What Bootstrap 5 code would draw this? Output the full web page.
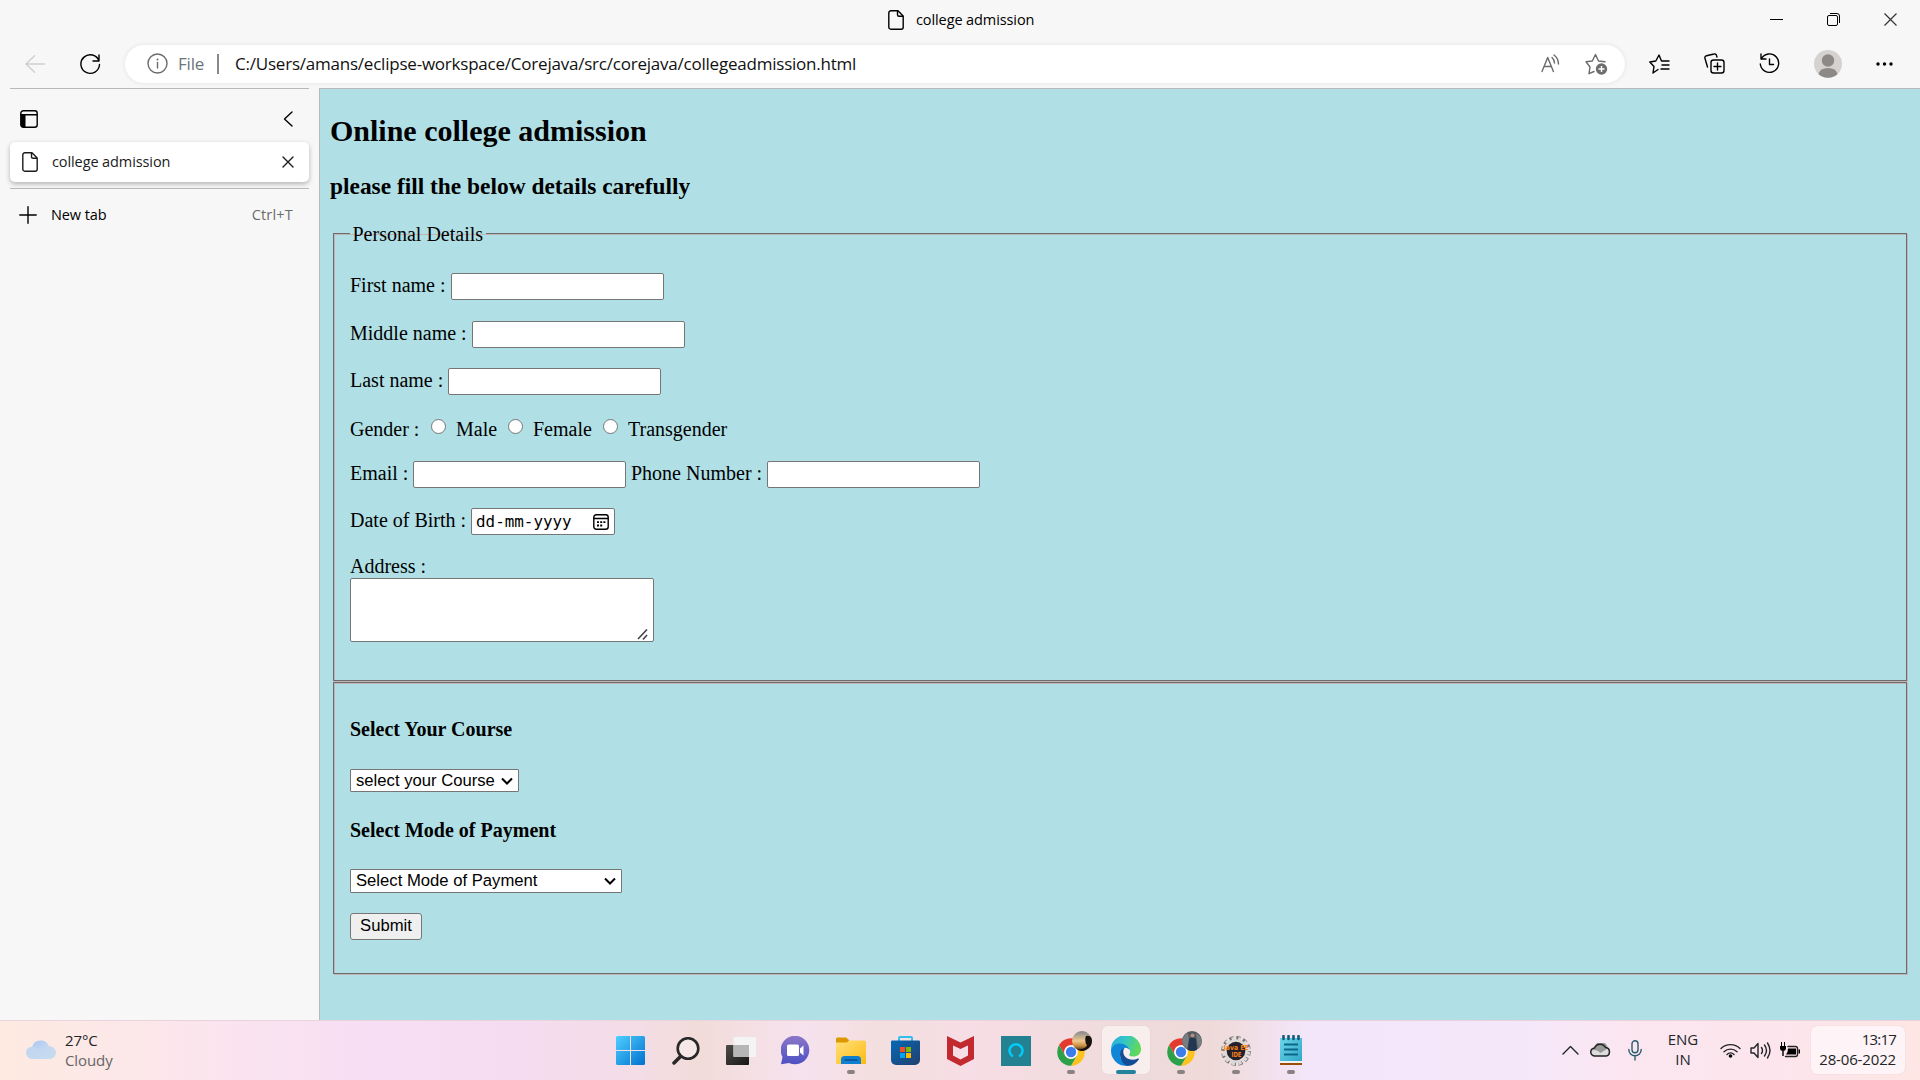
<!DOCTYPE html>
<html lang="en">
<head>
<meta charset="utf-8">
<title>college admission</title>
<link href="https://cdn.jsdelivr.net/npm/bootstrap@5.3.0/dist/css/bootstrap.min.css" rel="stylesheet">
<script src="https://cdn.jsdelivr.net/npm/bootstrap@5.3.0/dist/js/bootstrap.bundle.min.js"></script>
<style>
  body { width: 1920px; height: 1080px; font: 15px/20px "Open Sans", "Noto Sans", sans-serif; color: #1b1b1b; background: #f7f7f7; }
  svg { display: block; flex: none; }
  .ln { fill: none; stroke: currentColor; stroke-width: 1.4; stroke-linecap: round; stroke-linejoin: round; }

  .title-bar { height: 40px; display: grid; grid-template-columns: 888px 1fr 172px; }
  .title-doc { padding-top: 10px; }
  .win-btns > span { width: 57px; height: 38px; display: grid; place-items: center; }
  .ui-sm { font-size: 14.5px; letter-spacing: -.1px; }

  .tool-bar { height: 48px; padding: 0 0 1px 7px; }
  .tool-cell { width: 55px; display: grid; place-items: center; }
  .address { width: 1500px; height: 38px; border-radius: 19px; background: #fff; box-shadow: 0 0 5px rgba(0,0,0,.09); padding: 0 17px 0 22px; color: #6b6b6b; }
  .address-url { font-size: 17px; letter-spacing: -.22px; color: #111; }
  .address-sep { margin: 0 16px 0 13px; }

  .main-area { height: 932px; }
  .side-pane { width: 319px; padding: 0 10px; }
  .pane-head { height: 54px; border-top: 1px solid #b8b8b8; padding: 7px 16px 0 10px; }
  .tab-card { height: 40px; background: #fff; border-radius: 5px; box-shadow: 0 2px 5px rgba(0,0,0,.28); padding: 0 15px 0 12px; }
  .new-tab { margin-top: 6px; border-top: 1px solid #b8b8b8; height: 52px; padding: 0 16px 0 9px; }
  .pane-label { margin-left: 14px; }

  .page { background: #b0e0e6; border: 1px solid #b9b9b9; border-width: 1px 0 0 1px; padding: 0 10px; font: 20px/25px "Liberation Serif", serif; color: #000; }
  .page h2 { font: bold 30px/34px "Liberation Serif", serif; margin: 25px 0; }
  .page h3 { font: bold 23.4px/27px "Liberation Serif", serif; margin: 0 0 23px; }
  .page h4 { font: bold 20px/23px "Liberation Serif", serif; margin: 0; }
  .group-box { border: 1px solid #6e6c6d; box-shadow: inset 1px 1px #bfb5b7, 1px 1px #bfb5b7; margin: 0 3px; padding: 0 16px; }
  .group-box legend { float: none; width: auto; font-size: 20px; line-height: 22px; height: 23px; margin: 0; padding: 1px 2.5px 0; }
  .f-row { display: flex; align-items: flex-start; height: 27px; }
  .field { border: 1px solid #767676; border-radius: 2px; background: #fff; width: 213px; height: 27px; padding: 0; display: block; }
  .radio { appearance: none; width: 15px; height: 15px; border: 1px solid #767676; border-radius: 50%; background: #fff; margin: 2px 10px 0 0; }
  .date-field { width: 144px; padding: 0 5px 0 4px; font: 15.9px/25px "DejaVu Sans Mono", monospace; display: flex; justify-content: space-between; align-items: center; }
  .area { width: 304px; height: 64px; resize: none; }
  .pick { appearance: none; display: block; border: 1px solid #767676; border-radius: 1px; font: 16.67px/20px "Liberation Sans", sans-serif; color: #000; padding: 0 5px; background: #fff url("data:image/svg+xml,%3Csvg xmlns='http://www.w3.org/2000/svg' width='12' height='8'%3E%3Cpath d='M1 1.5l5 5 5-5' fill='none' stroke='%23000' stroke-width='2'/%3E%3C/svg%3E") no-repeat right 5px center; }
  .send { display: block; width: 72px; height: 27px; border: 1px solid #767676; border-radius: 3px; background: #efefef; font: 16.67px/22px "Liberation Sans", sans-serif; padding: 0 0 2px; color: #000; }

  .task-bar { height: 60px; display: grid; grid-template-columns: 603px 715px 602px; border-top: 1px solid #e9d3dc;
    background: linear-gradient(90deg, #fdeae0 0, #fce7ea 140px, #f9e2f1 280px, #f7def4 370px, #f5dcf0 520px, #f3dde6 640px, #f2dcd9 700px, #f6e2ee 800px, #f3dfdf 880px, #f7dde5 970px, #f0dbdd 1100px, #efdad9 1210px, #f4e6fa 1310px, #f5e7fa 1530px, #fbe6f0 1630px, #fce5ec 1780px, #fde6e3 1920px); }
  .weather { padding: 0 0 2px 26px; }
  .app { width: 55px; height: 59px; display: grid; place-items: center; position: relative; }
  .app.run::after { content: ""; position: absolute; bottom: 6px; left: 24px; width: 8px; height: 4px; border-radius: 2px; background: #8a8183; }
  .app.current::before { content: ""; position: absolute; left: 4px; top: 5px; width: 48px; height: 48px; border-radius: 5px; background: #f8eeee; box-shadow: 0 0 1px #cbb; }
  .app.current::after { left: 18px; width: 20px; background: #24839a; }
  .app svg { position: relative; }
  .badge-app { margin: 0 0 4px 7px; }
  .tray { padding: 0 0 1px 240px; }
  .tray > div { display: grid; place-items: center; }
  .clock { width: 94px; height: 48px; margin-left: 5px; border-radius: 6px; background: #fef3f6; box-shadow: 0 0 1px #dbc; padding: 0 9px 2px 0; text-align: right; letter-spacing: -.15px; }
  .clock-time { letter-spacing: -.8px; }
</style>
</head>
<body class="overflow-hidden">
<svg width="0" height="0" class="position-absolute">
  <defs>
    <symbol id="doc" viewBox="0 0 16 20"><path class="ln" d="M3 .8h7l5.200 5.200v11.200a2 2 0 0 1-2 2H2.800a2 2 0 0 1-2-2V2.800a2 2 0 0 1 2-2zM9.500 1v3.800a1.500 1.500 0 0 0 1.500 1.500h4"/></symbol>
    <symbol id="chrome" viewBox="0 0 35 35">
      <path d="M2.050 14.100A13.800 13.800 0 0 1 25.950 14.100H14a6.900 6.900 0 0 0-6 10.300z" fill="#e33b2e"/>
      <path d="M25.950 14.100A13.800 13.800 0 0 1 14 34.800l6-10.350a6.900 6.900 0 0 0 0-6.900l-3-3.450z" fill="#fcc31e"/>
      <path d="M2.050 14.100A13.800 13.800 0 0 0 14 34.800l6-10.350a6.900 6.900 0 0 1-12 0z" fill="#2da04a"/>
      <circle cx="14" cy="21" r="6.600" fill="#fff"/><circle cx="14" cy="21" r="5.200" fill="#3b7ded"/>
    </symbol>
    <linearGradient id="gWin" x1="0" y1="0" x2="1" y2="1"><stop offset="0" stop-color="#4fd0ff"/><stop offset="1" stop-color="#0070cf"/></linearGradient>
    <linearGradient id="gChat" x1="0" y1="0" x2="0" y2="1"><stop offset="0" stop-color="#8d77c8"/><stop offset="1" stop-color="#4d50c4"/></linearGradient>
    <linearGradient id="gFold" x1="0" y1="0" x2="1" y2="1"><stop offset="0" stop-color="#ffe07a"/><stop offset="1" stop-color="#fdbb13"/></linearGradient>
    <linearGradient id="gStore" x1="0" y1="0" x2="1" y2="1"><stop offset="0" stop-color="#0669b7"/><stop offset="1" stop-color="#223f6e"/></linearGradient>
    <linearGradient id="gEdgeTop" x1="0" y1="0" x2="1" y2=".3"><stop offset="0" stop-color="#2aa7e2"/><stop offset=".5" stop-color="#35c6c6"/><stop offset="1" stop-color="#5fd95a"/></linearGradient>
    <linearGradient id="gSun" x1="0" y1="0" x2="0" y2="1"><stop offset="0" stop-color="#7f8790"/><stop offset=".5" stop-color="#f0c88c"/><stop offset=".75" stop-color="#c78a3c"/><stop offset="1" stop-color="#241a14"/></linearGradient>
    <linearGradient id="gCloud" x1="0" y1="0" x2="1" y2="1"><stop offset="0" stop-color="#a4c4f2"/><stop offset="1" stop-color="#dfe9f3"/></linearGradient>
    <linearGradient id="gNote" x1="0" y1="0" x2="1" y2="1"><stop offset="0" stop-color="#6cd6ea"/><stop offset="1" stop-color="#2fa5c8"/></linearGradient>
    <linearGradient id="gDark" x1="0" y1="0" x2="1" y2="1"><stop offset="0" stop-color="#4c4c4a"/><stop offset="1" stop-color="#161616"/></linearGradient>
  </defs>
</svg>

<header>
  <div class="title-bar">
    <span></span>
    <div class="title-doc d-flex align-items-start text-black">
      <svg width="16" height="20"><use href="#doc"/></svg>
      <span class="ui-sm ms-2 ps-1">college admission</span>
    </div>
    <div class="d-flex win-btns text-black">
      <span><svg width="13" height="13"><path d="M0 6.500h13" stroke="#000"/></svg></span>
      <span><svg width="13" height="13"><g fill="none" stroke="#000"><rect x=".5" y="2.500" width="10" height="10" rx="1.500"/><path d="M3 .5h7a2.500 2.500 0 0 1 2.500 2.500v7"/></g></svg></span>
      <span><svg width="13" height="13"><path d="M.5.5l12 12m0-12l-12 12" stroke="#333" stroke-width="1.200"/></svg></span>
    </div>
  </div>
  <div class="tool-bar d-flex align-items-center">
    <div class="tool-cell"><svg width="20" height="18" style="color:#cfcfcf"><path class="ln" d="M19.500 9H.8M9.500.7L1 9l8.500 8.300"/></svg></div>
    <div class="tool-cell text-black"><svg width="22" height="22"><path class="ln" d="M20 8A9.300 9.300 0 1 0 20.500 11.500M20 2v6h-6"/></svg></div>
    <div class="address d-flex align-items-center ms-2">
      <svg width="21" height="21"><g class="ln"><circle cx="10.500" cy="10.500" r="9.500"/><path d="M10.500 9.500v5.500"/></g><circle cx="10.500" cy="6.500" r="1" fill="#6b6b6b"/></svg>
      <span class="address-url text-secondary ms-2 ps-0" style="padding-left:2px!important">File</span>
      <svg width="2" height="20" class="address-sep"><path d="M1 0v20" stroke="#888" stroke-width="2"/></svg>
      <span class="address-url">C:/Users/amans/eclipse-workspace/Corejava/src/corejava/collegeadmission.html</span>
      <svg width="20" height="20" class="ms-auto"><path class="ln" d="M1 17.500L6.700 3.500 12.400 17.500M3 12.500h7.400M11 3.500q2.500 2.500 2.500 5.500M13 1q4.500 3.500 4.500 9"/></svg>
      <svg width="23" height="22" class="ms-4"><path class="ln" d="M9 18.500l-5 2.200 1-6.700L1 8.800 7.300 8 10.500 1.500 13.500 8l6.500.8"/><circle cx="16.500" cy="16" r="5.700" fill="#6d6d6d"/><path d="M13.500 16h6M16.500 13v6" stroke="#fff" stroke-width="1.400"/></svg>
    </div>
    <div class="d-flex text-black" style="padding-left:7px">
      <div class="tool-cell"><svg width="21" height="20"><path class="ln" d="M9 15.500l-5 3.500 1-6.500L.8 8l6-1L10 1l2.500 6H20M13 11h7M12 15h8"/></svg></div>
      <div class="tool-cell"><svg width="21" height="21"><g class="ln"><path d="M3.500 14L1 5.500a2 2 0 0 1 1.500-2.800L10 1a2 2 0 0 1 2.500 1.500L13 4"/><rect x="7" y="7" width="13" height="13" rx="2.500"/><path d="M13.500 10v7M10 13.500h7"/></g></svg></div>
      <div class="tool-cell"><svg width="21" height="21"><path class="ln" d="M2.500 5.500A9.200 9.200 0 1 1 1.300 11M2 1v5h5M10.500 6v5.500h4"/></svg></div>
      <div class="tool-cell" style="width:61px"><svg width="28" height="28"><circle cx="14" cy="14" r="14" fill="#d5d3d0"/><circle cx="14" cy="10.500" r="6.200" fill="#8d8986"/><path d="M4.500 24Q6 18 14 18t9.500 6A14 14 0 0 1 4.500 24z" fill="#8d8986"/></svg></div>
      <div class="tool-cell" style="width:53px"><svg width="17" height="4"><circle cx="2" cy="2" r="1.700"/><circle cx="8.500" cy="2" r="1.700"/><circle cx="15" cy="2" r="1.700"/></svg></div>
    </div>
  </div>
</header>

<main class="main-area d-flex">
  <aside class="side-pane flex-shrink-0">
    <div class="pane-head d-flex align-items-center justify-content-between text-black">
      <svg width="18" height="18"><rect x=".8" y=".8" width="16.400" height="16.400" rx="2.500" class="ln"/><path d="M1 4.800h16" class="ln"/><path d="M1 4.500h4.500v12.700H3q-2 0-2-2z"/></svg>
      <svg width="10" height="16"><path class="ln" d="M9 1L1.500 8 9 15"/></svg>
    </div>
    <div class="tab-card d-flex align-items-center">
      <svg width="16" height="20"><use href="#doc"/></svg>
      <span class="ui-sm pane-label">college admission</span>
      <svg width="12" height="12" class="ms-auto"><path class="ln" d="M1 1l10 10M11 1L1 11"/></svg>
    </div>
    <div class="new-tab d-flex align-items-center text-black">
      <svg width="18" height="18"><path class="ln" d="M9 .8v16.400M.8 9h16.400"/></svg>
      <span class="ui-sm pane-label">New tab</span>
      <span class="ui-sm ms-auto" style="color:#6b6b6b;letter-spacing:.2px">Ctrl+T</span>
    </div>
  </aside>

  <section class="page flex-grow-1">
    <h2>Online college admission</h2>
    <h3>please fill the below details carefully</h3>
    <form>
      <fieldset class="group-box" style="height:459px;margin-top:-1px">
        <legend>Personal Details</legend>
        <div class="f-row" style="margin-top:28px"><label style="width:101px">First name :</label><input class="field"></div>
        <div class="f-row" style="margin-top:21px"><label style="width:122px">Middle name :</label><input class="field"></div>
        <div class="f-row" style="margin-top:20px"><label style="width:98px">Last name :</label><input class="field"></div>
        <div class="f-row" style="margin-top:22px"><span style="width:81px">Gender :</span>
          <input type="radio" class="radio"><label style="width:52px">Male</label>
          <input type="radio" class="radio"><label style="width:70px">Female</label>
          <input type="radio" class="radio"><label>Transgender</label></div>
        <div class="f-row" style="margin-top:17px"><label style="width:63px">Email :</label><input class="field"><label style="width:141px;padding-left:5px">Phone Number :</label><input class="field"></div>
        <div class="f-row" style="margin-top:20px"><label style="width:121px">Date of Birth :</label>
          <div class="field date-field"><span>dd-mm-yyyy</span><svg width="16" height="16"><rect x=".8" y=".8" width="14.400" height="14.400" rx="2.500" class="ln"/><path class="ln" d="M1 4.500h14"/><path d="M4 8.200h2m1.200 0h2m1.200 0h2M4 11.500h2m1.200 0h2" stroke="#000" stroke-width="1.800"/></svg></div></div>
        <div style="margin-top:19px"><label class="d-block" style="height:24px">Address :</label>
          <div class="field area d-flex align-items-end justify-content-end"><svg width="12" height="12" class="m-0 me-1"><path d="M1 10L10 .5M6 10.500L10 6" stroke="#444" stroke-width="1.600"/></svg></div></div>
      </fieldset>
      <fieldset class="group-box" style="height:292px;margin-top:1px;padding-top:35px">
        <h4>Select Your Course</h4>
        <select class="pick" style="width:169px;height:23px;margin-top:28px"><option>select your Course</option></select>
        <h4 style="margin-top:27px">Select Mode of Payment</h4>
        <select class="pick" style="width:272px;height:24px;margin-top:27px"><option>Select Mode of Payment</option></select>
        <button type="button" class="send" style="margin-top:20px">Submit</button>
      </fieldset>
    </form>
  </section>
</main>

<footer class="task-bar">
  <div class="weather d-flex align-items-center">
    <svg width="30" height="20"><path d="M7 19a6 6 0 0 1-1-12 9 9 0 0 1 17-1 6.500 6.500 0 0 1 .5 13z" fill="url(#gCloud)"/><path d="M0 13a6.500 6.500 0 0 1 12-3.500 4 4 0 0 1 5 1A7 7 0 0 1 30 12.500a6.500 6.500 0 0 1-6.500 6.500H6.500A6.500 6 0 0 1 0 13z" fill="#c3d8ee" opacity=".85"/></svg>
    <div style="margin-left:9px;color:#666;letter-spacing:-.1px">
      <div class="text-dark">27°C</div><div>Cloudy</div>
    </div>
  </div>
  <div class="d-flex">
    <div class="app"><svg width="29" height="29" fill="url(#gWin)"><path d="M1.500 0H14v14H0V1.500A1.500 1.500 0 0 1 1.500 0zM15 0h12.500A1.500 1.500 0 0 1 29 1.500V14H15zM0 15h14v14H1.500A1.500 1.500 0 0 1 0 27.500zM15 15h14v12.500a1.500 1.500 0 0 1-1.500 1.500H15z"/></svg></div>
    <div class="app"><svg width="28" height="28"><circle cx="16" cy="11.500" r="10.300" fill="#fff" fill-opacity=".35" stroke="#292929" stroke-width="2.600"/><path d="M8.500 19.500L2 26" stroke="#292929" stroke-width="3.500" stroke-linecap="round"/></svg></div>
    <div class="app"><svg width="30" height="28"><rect y="8" width="23" height="20" rx="1" fill="url(#gDark)"/><rect x="7.500" width="22.500" height="20" rx="1" fill="#f4f4f4"/><rect x="7.500" y="8" width="15.500" height="12" fill="#b6b6b6"/></svg></div>
    <div class="app"><svg width="29" height="29"><path d="M0 28.300L1.500 21A14.300 14.300 0 1 1 8 27z" fill="url(#gChat)"/><rect x="6" y="8.500" width="12" height="11.500" rx="1.500" fill="#fff"/><path d="M19 12.500l3.500-3v10l-3.500-3z" fill="#fff"/></svg></div>
    <div class="app run"><svg width="30" height="27"><path d="M0 8V2q0-1.500 1.500-1.500H10L13 3v5z" fill="#dc9800"/><path d="M0 5.500h11L13 3.500h15.500A1.500 1.500 0 0 1 30 5v22H0z" fill="url(#gFold)"/><path d="M5 27v-4.500A3.500 3.500 0 0 1 8.500 19h13a3.500 3.500 0 0 1 3.500 3.500V27z" fill="#0f7fd0"/><path d="M8.500 23h13" stroke="#0b4f94" stroke-width="1.500"/></svg></div>
    <div class="app"><svg width="29" height="30"><path d="M8 6V2q0-1 1-1h11q1 0 1 1v4" fill="none" stroke="#2fc0ef" stroke-width="2"/><path d="M0 5.500q0-1 1-1h27q1 0 1 1V24a5 5 0 0 1-5 5H5a5 5 0 0 1-5-5z" fill="url(#gStore)"/><path d="M9 11h5v5H9z" fill="#f25022"/><path d="M15 11h5v5h-5z" fill="#7fba00"/><path d="M9 17h5v5H9z" fill="#00a4ef"/><path d="M15 17h5v5h-5z" fill="#ffb900"/></svg></div>
    <div class="app"><svg width="27" height="30"><path fill-rule="evenodd" d="M0 0l13.500 6.500L27 0v23l-13.500 7L0 23zM6 9.500V19.500l7.500 4 7.500-4V9.500L13.500 13z" fill="#c22a30"/></svg></div>
    <div class="app"><svg width="30" height="30"><path fill="#248192" d="M0 0h30v30H0z"/><path d="M12 20.500a6.500 6.500 0 1 1 6 0" fill="none" stroke="#00cdf7" stroke-width="2.500"/></svg></div>
    <div class="app run"><svg width="35" height="35" class="badge-app"><use href="#chrome"/><circle cx="25" cy="10" r="10" fill="url(#gSun)"/><path d="M29 5q4-1 5.500 2A10 10 0 0 1 20 18.500q8 0 10-4-3-5-1-9.500z" fill="#17110f"/></svg></div>
    <div class="app run current"><svg width="30" height="30"><path d="M0 14A15 14.500 0 0 1 30 13c0 5-3.500 7.500-8 7.500-3 0-4.500-1-3.500-2.500 1.500-2.500.5-6-3.500-7.500C9 8.500 2 11 0 16z" fill="url(#gEdgeTop)"/><path d="M0 15C1 8 8 6 13.500 8.500c3 1.500 5 3.500 5 6-1-2-3-3-5-2.500-5 2-6 10-1 14.500 2 2 5 3 7.500 2.500A15 15 0 0 1 0 15z" fill="#0f86d8"/><path d="M9 18c0-3 2-5.500 4.500-6-2 2.500-1.500 6.500 1 9 3 3 8 3.500 12.500 1.500.8-.3 1.300.2.800 1-3 4.500-7.500 6.800-12 6.300C11 28 9 22 9 18z" fill="#124d95"/></svg></div>
    <div class="app run"><svg width="35" height="35" class="badge-app"><use href="#chrome"/><circle cx="25" cy="10" r="10" fill="#555a60"/><path d="M19 2q3 0 3 7l-2 9q-5-4-5-9zM29 2q5 3 6 8-1 5-4 8z" fill="#777d80"/><path d="M22 8l3-2 4 2 1 11q-5 2-9 0z" fill="#233753"/><circle cx="25.500" cy="4.500" r="2" fill="#b58f7e"/></svg></div>
    <div class="app run"><svg width="30" height="30"><circle cx="15" cy="15" r="13" fill="none" stroke="#77736f" stroke-width="3.800" stroke-dasharray="4.200 2.600"/><circle cx="15" cy="15" r="12.700" fill="none" stroke="#dedad7" stroke-width="3" stroke-dasharray="3 3.800" stroke-dashoffset="-.6"/><circle cx="15" cy="15" r="11.800" fill="#dedad7"/><circle cx="15" cy="15" r="9.300" fill="#26202d"/><text x="15" y="14" text-anchor="middle" font-family="DejaVu Sans" font-weight="bold" font-size="7" textLength="25" lengthAdjust="spacingAndGlyphs" fill="#f58212">Java EE</text><text x="15.500" y="20.500" text-anchor="middle" font-family="DejaVu Sans" font-weight="bold" font-size="7" textLength="10" lengthAdjust="spacingAndGlyphs" fill="#f58212">IDE</text></svg></div>
    <div class="app run"><svg width="22" height="31"><path d="M0 3h22v24H0z" fill="url(#gNote)"/><path d="M0 26h22v2.500H0z" fill="#f2f2f2"/><path d="M0 28h22v2H0z" fill="#9b4d08"/><path d="M3.500 1v3M8.500 1v3M13.500 1v3M18.500 1v3" stroke="#145a78" stroke-width="2.600" stroke-linecap="round"/><path d="M4 9.500h14M4 14.500h14M4 19.500h14" stroke="#0c6787" stroke-width="1.800"/></svg></div>
  </div>
  <div class="tray d-flex align-items-center text-dark">
    <div style="width:24px"><svg width="17" height="10"><path class="ln" d="M1 9l7.500-7.500L16 9"/></svg></div>
    <div style="width:36px"><svg width="21" height="14"><path d="M5 13a4 4 0 0 1-.5-8 6 6 0 0 1 11-.5A4.300 4.300 0 0 1 16 13z" fill="#ddd"/><path d="M1.500 7.500q5-2 9 2.500l7-4.500A5.500 5.500 0 0 0 4.500 5z" fill="#999"/><path d="M5 13a4 4 0 0 1-.5-8 6 6 0 0 1 11-.5A4.300 4.300 0 0 1 16 13z" fill="none" stroke="#222" stroke-width="1.500"/></svg></div>
    <div style="width:34px"><svg width="14" height="21" style="color:#2a5d70"><g class="ln"><rect x="4" y=".8" width="6" height="12" rx="3"/><path d="M.8 9.500a6.200 6.200 0 0 0 12.400 0M7 16v4"/></g></svg></div>
    <div style="width:62px;text-align:center;padding-bottom:2px">ENG<br>IN</div>
    <div style="width:32px"><svg width="21" height="15"><path class="ln" d="M1 5.500a13.500 13.500 0 0 1 19 0M4 8.800a9.200 9.200 0 0 1 13 0M7 11.500a5 5 0 0 1 7 0"/><circle cx="10.500" cy="13" r="1.800"/></svg></div>
    <div style="width:28px"><svg width="21" height="17"><path class="ln" d="M1 6h3l4-4.500v14L4 11H1zM11.500 5.500q2 3 0 6M14.500 3q4 5.500 0 11M17.500 1q5 7.500 0 15"/></svg></div>
    <div style="width:32px"><svg width="21" height="16"><path d="M5.500 14.500h10a2 2 0 0 0 2-2v-6a2 2 0 0 0-2-2H8" class="ln"/><path d="M8 6.500h8v6H6q2-2 2-6zM18.500 7.500h1.500v4h-1.500zM0 4h6v2q0 3-3 3T0 6zM1 0h1v4H1zM4 0h1v4H4zM2.300 8h1.400v6H2.300z"/></svg></div>
    <div class="clock justify-content-end"><div><span class="clock-time">13:17</span><br>28-06-2022</div></div>
  </div>
</footer>
</body>
</html>
